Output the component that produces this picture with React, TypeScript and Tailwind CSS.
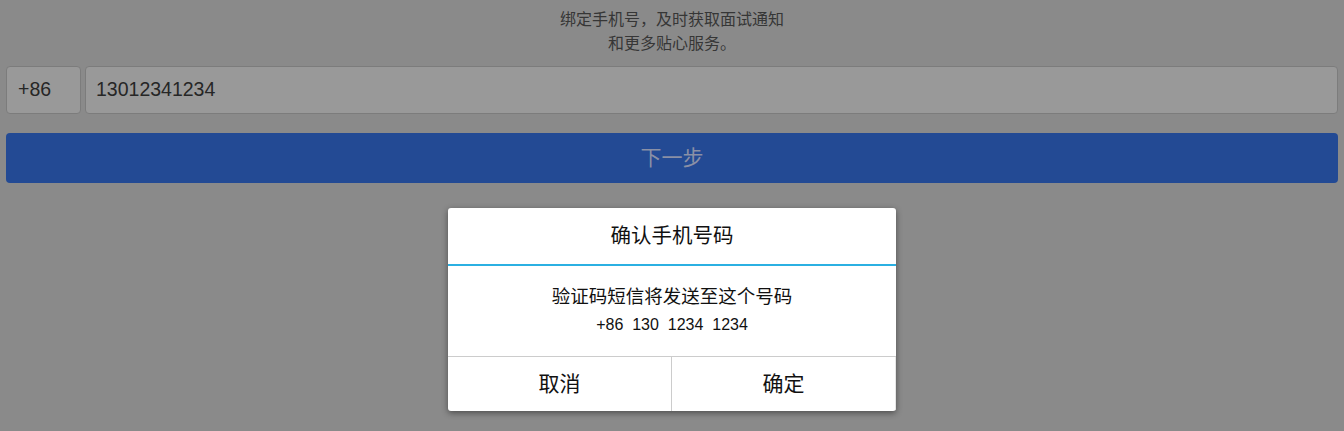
import React from "react";

export default function App() {
  const cjk = { fontFamily: '"Liberation Sans", "Noto Sans CJK SC", sans-serif' };
  return (
    <div className="relative h-[431px] w-full overflow-hidden bg-[#8a8a8a]" style={cjk}>
      <div className="pt-[8px] text-center text-[16px] leading-[24px] text-[#363636]">
        <div>绑定手机号，及时获取面试通知</div>
        <div>和更多贴心服务。</div>
      </div>
      <div className="mx-[6px] mt-[10px] flex gap-[4px]">
        <div className="flex h-[48px] w-[75px] items-center rounded-[4px] border border-[#7c7c7c] bg-[#999999] pl-[11px] text-[19.5px] text-[#262626]">
          +86
        </div>
        <div className="flex h-[48px] flex-1 items-center rounded-[4px] border border-[#7c7c7c] bg-[#999999] pl-[10px] text-[19.5px] text-[#262626]">
          13012341234
        </div>
      </div>
      <div className="mx-[6px] mt-[19px] flex h-[50px] items-center justify-center rounded-[4px] bg-[#234a94] text-[21px] text-[#8a90a6]">
        下一步
      </div>

      <div className="absolute left-[448px] top-[208px] w-[448px] overflow-hidden rounded-[3px] bg-white shadow-[0_2px_6px_rgba(0,0,0,0.45)]">
        <div className="flex h-[56px] items-center justify-center text-[20.5px] text-[#111]">确认手机号码</div>
        <div className="h-[2px] bg-[#2bb0e2]" />
        <div className="flex h-[90px] flex-col items-center pt-[17px] text-[18.5px] leading-[28px] text-[#111]">
          <div>验证码短信将发送至这个号码</div>
          <div className="whitespace-pre text-[16px]">+86  130  1234  1234</div>
        </div>
        <div className="flex h-[55px] border-t border-[#cccccc] text-[21px] text-[#111]">
          <div className="flex flex-1 items-center justify-center border-r border-[#cccccc]">取消</div>
          <div className="flex flex-1 items-center justify-center border-r border-[#e6e6e6]">确定</div>
        </div>
      </div>
    </div>
  );
}
